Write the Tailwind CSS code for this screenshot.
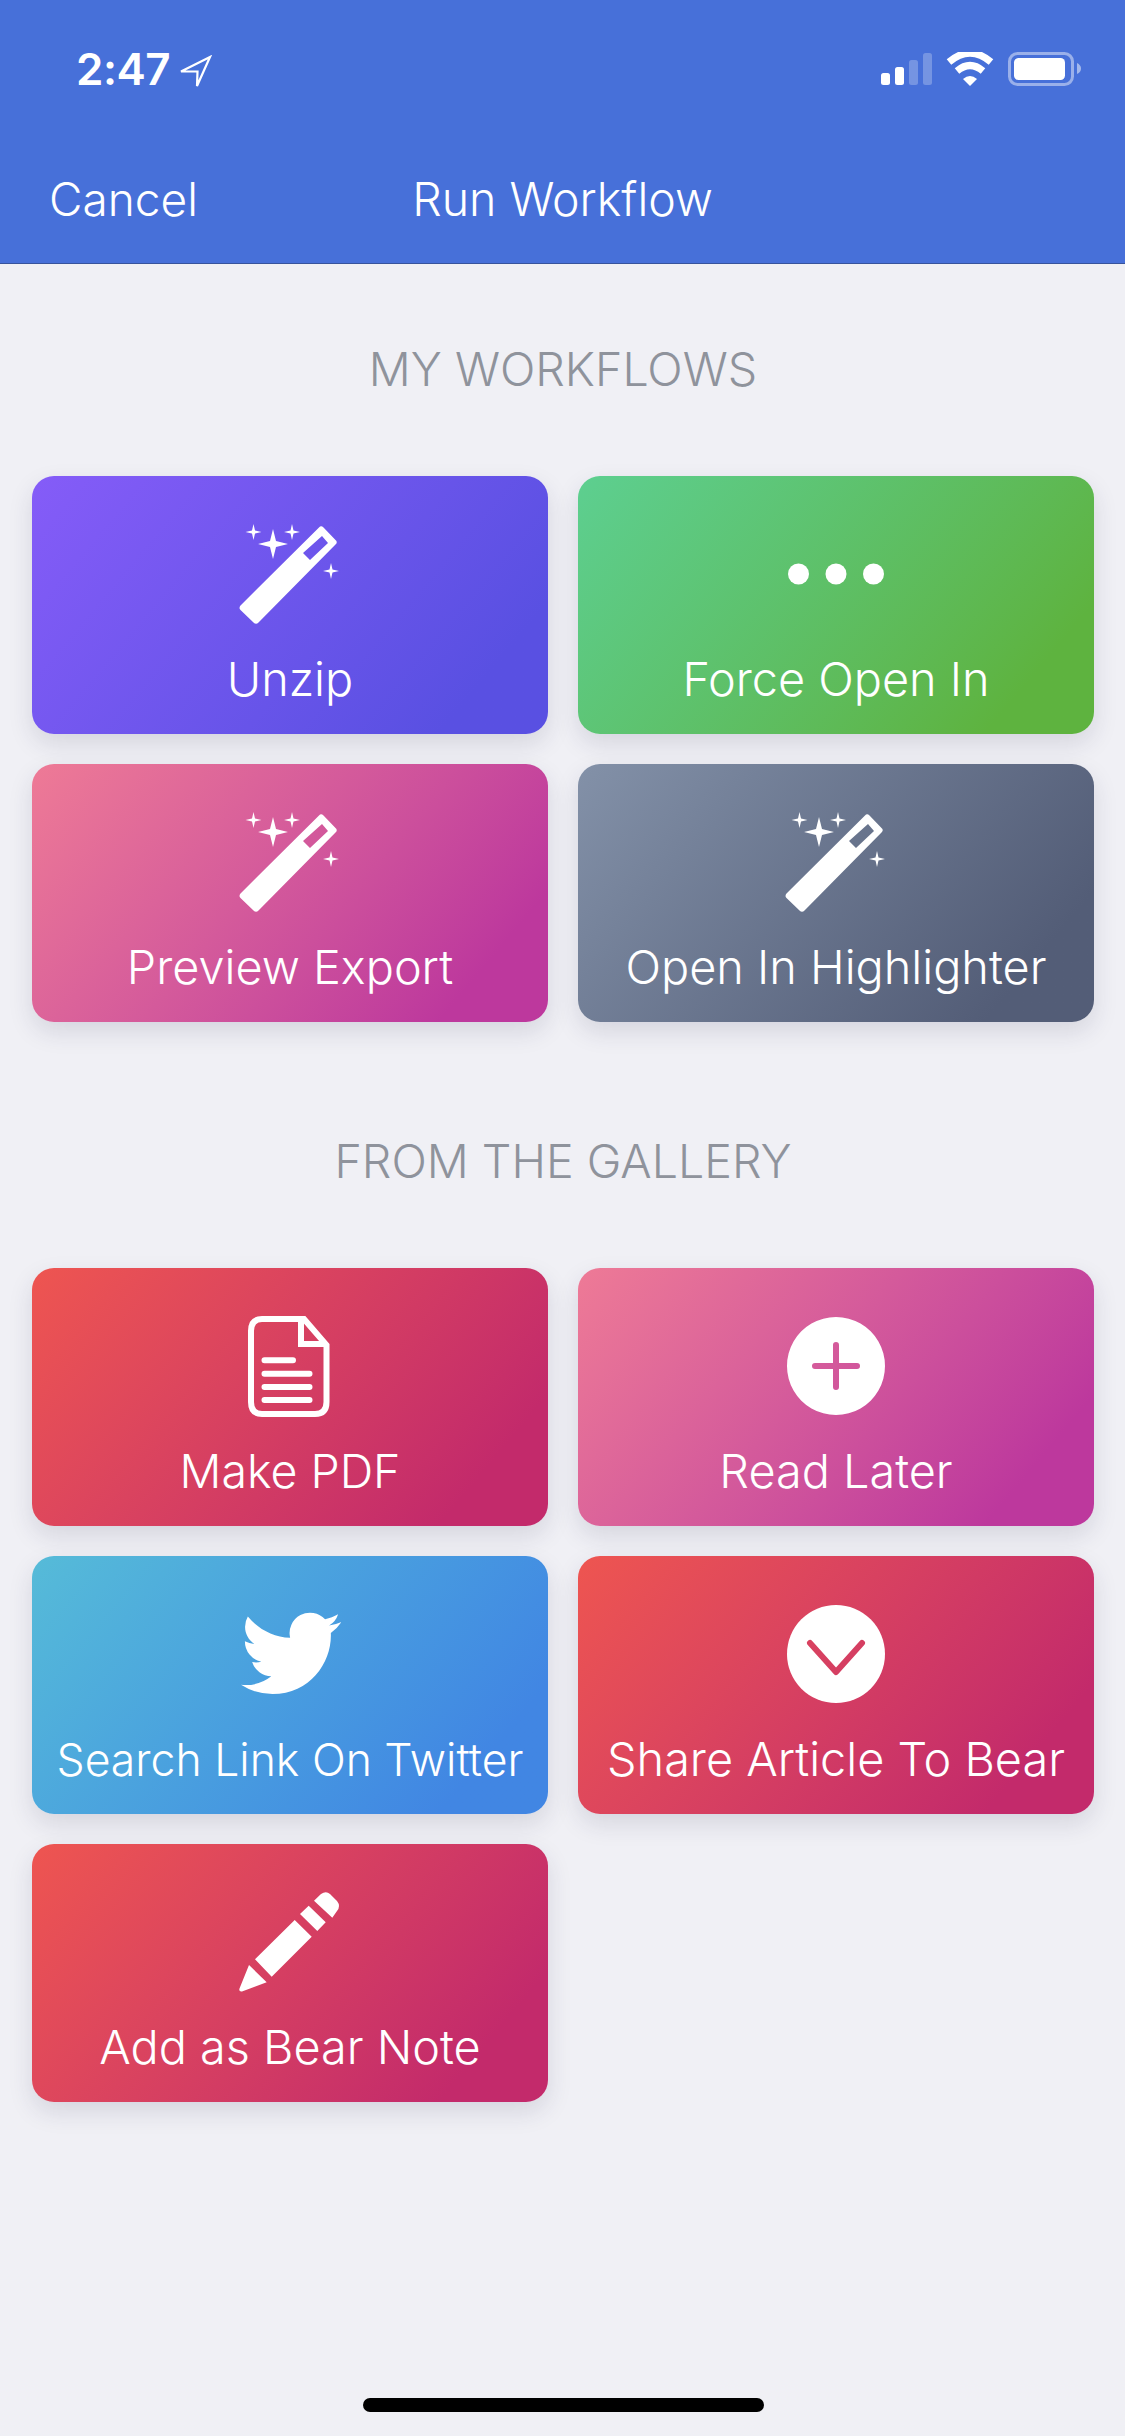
<!DOCTYPE html>
<html>
<head>
<meta charset="utf-8">
<script src="https://cdn.jsdelivr.net/npm/@tailwindcss/browser@4"></script>
</head>
<body class="m-0">
<div class="w-[1125px] h-[2436px] bg-[#f0f0f5] flex flex-col overflow-hidden font-['Inter',sans-serif]">
  <header class="h-[264px] bg-[#4770d9] border-b border-[#37539c] text-white shrink-0">
    <div class="h-[169px] flex justify-between pl-[76px] pr-[44px] pt-[46px]">
      <div class="flex items-start gap-[9px]">
        <span class="text-[44px] leading-[46px] font-semibold tracking-[-0.5px]">2:47</span>
        <svg class="w-[34px] h-[34px] mt-[9px]" viewBox="0 0 34 34"><path d="M31 2 L2 16.5 L18.5 16.5 L18 31 Z" fill="none" stroke="#fff" stroke-width="2.2" stroke-linejoin="miter"/></svg>
      </div>
      <div class="flex items-start">
        <svg class="w-[200px] h-[40px] mt-[6px]" viewBox="881 52 200 40">
          <rect x="881" y="73" width="9" height="12" rx="2.5" fill="#fff"/>
          <rect x="895" y="67" width="9" height="18" rx="2.5" fill="#fff"/>
          <rect x="909" y="60" width="9" height="25" rx="2.5" fill="#fff" fill-opacity=".25"/>
          <rect x="923" y="53" width="9" height="32" rx="2.5" fill="#fff" fill-opacity=".25"/>
          <path d="M949 62 Q970 44 991 62" fill="none" stroke="#fff" stroke-width="7" stroke-linejoin="round"/>
          <path d="M957 71 Q970 60 983 71" fill="none" stroke="#fff" stroke-width="7"/>
          <path d="M963 79 Q970 73 977 79 L970 86 Z" fill="#fff"/>
          <rect x="1009.5" y="53.5" width="63" height="31" rx="8" fill="none" stroke="#fff" stroke-opacity=".45" stroke-width="3"/>
          <rect x="1014" y="58" width="51" height="22" rx="4.5" fill="#fff"/>
          <path d="M1077 63 Q1081 65 1081 68.5 Q1081 72 1077 74 Z" fill="#fff" fill-opacity=".5"/>
        </svg>
      </div>
    </div>
    <div class="grid grid-cols-[1fr_auto_1fr] items-center h-[60px] px-[49px]">
      <span class="text-[46px] leading-[60px] font-light">Cancel</span>
      <span class="text-[46.5px] leading-[60px] font-light">Run Workflow</span>
      <span></span>
    </div>
  </header>

  <main class="flex-1 flex flex-col pl-[32px] pr-[31px]">
    <h2 class="mt-[75px] h-[60px] text-center text-[46.6px] leading-[60px] font-light text-[#8f939c]">MY WORKFLOWS</h2>
    <div class="mt-[77px] grid grid-cols-2 gap-[30px]">
      <div class="h-[258px] rounded-[22px] text-white flex flex-col items-center pt-[44px] bg-linear-130 from-[#855cf8] to-[#5950e2] to-85% shadow-[0_10px_24px_rgba(40,40,80,0.13)]">
        <svg class="w-[110px] h-[110px] shrink-0" viewBox="0 0 110 110" fill="#fff"><path fill-rule="evenodd" d="M84 7.5 Q86 5 88.5 7.5 L100.5 20 Q103 22 100.5 24.5 L23.5 102.5 Q21 105 18.5 102.5 L5.5 90 Q3.5 88 5.5 85.5 Z M87 16 L93 23 L75 40 L68 33 Z"/><path d="M38 9 L41 21 L53 24 L41 27 L38 39 L35 27 L23 24 L35 21 Z M18.5 4 L20 10.5 L26.5 12 L20 13.5 L18.5 20 L17 13.5 L10.5 12 L17 10.5 Z M57 4 L58.5 10.5 L65 12 L58.5 13.5 L57 20 L55.5 13.5 L49 12 L55.5 10.5 Z M96 43 L97.5 49.5 L104 51 L97.5 52.5 L96 59 L94.5 52.5 L88 51 L94.5 49.5 Z"/></svg>
        <span class="mt-[19px] text-[46.8px] leading-[60px] font-light whitespace-nowrap">Unzip</span>
      </div>
      <div class="h-[258px] rounded-[22px] text-white flex flex-col items-center pt-[44px] bg-linear-130 from-[#5dcf90] to-[#5eb33f] to-85% shadow-[0_10px_24px_rgba(40,40,80,0.13)]">
        <svg class="w-[110px] h-[110px] shrink-0" viewBox="0 0 110 110" fill="#fff"><circle cx="17.5" cy="54" r="10.5"/><circle cx="55" cy="54" r="10.5"/><circle cx="92.5" cy="54" r="10.5"/></svg>
        <span class="mt-[19px] text-[46.8px] leading-[60px] font-light whitespace-nowrap">Force Open In</span>
      </div>
      <div class="h-[258px] rounded-[22px] text-white flex flex-col items-center pt-[44px] bg-linear-130 from-[#ee7a96] to-[#bd389d] to-85% shadow-[0_10px_24px_rgba(40,40,80,0.13)]">
        <svg class="w-[110px] h-[110px] shrink-0" viewBox="0 0 110 110" fill="#fff"><path fill-rule="evenodd" d="M84 7.5 Q86 5 88.5 7.5 L100.5 20 Q103 22 100.5 24.5 L23.5 102.5 Q21 105 18.5 102.5 L5.5 90 Q3.5 88 5.5 85.5 Z M87 16 L93 23 L75 40 L68 33 Z"/><path d="M38 9 L41 21 L53 24 L41 27 L38 39 L35 27 L23 24 L35 21 Z M18.5 4 L20 10.5 L26.5 12 L20 13.5 L18.5 20 L17 13.5 L10.5 12 L17 10.5 Z M57 4 L58.5 10.5 L65 12 L58.5 13.5 L57 20 L55.5 13.5 L49 12 L55.5 10.5 Z M96 43 L97.5 49.5 L104 51 L97.5 52.5 L96 59 L94.5 52.5 L88 51 L94.5 49.5 Z"/></svg>
        <span class="mt-[19px] text-[46.8px] leading-[60px] font-light whitespace-nowrap">Preview Export</span>
      </div>
      <div class="h-[258px] rounded-[22px] text-white flex flex-col items-center pt-[44px] bg-linear-130 from-[#8391a8] to-[#535d77] to-85% shadow-[0_10px_24px_rgba(40,40,80,0.13)]">
        <svg class="w-[110px] h-[110px] shrink-0" viewBox="0 0 110 110" fill="#fff"><path fill-rule="evenodd" d="M84 7.5 Q86 5 88.5 7.5 L100.5 20 Q103 22 100.5 24.5 L23.5 102.5 Q21 105 18.5 102.5 L5.5 90 Q3.5 88 5.5 85.5 Z M87 16 L93 23 L75 40 L68 33 Z"/><path d="M38 9 L41 21 L53 24 L41 27 L38 39 L35 27 L23 24 L35 21 Z M18.5 4 L20 10.5 L26.5 12 L20 13.5 L18.5 20 L17 13.5 L10.5 12 L17 10.5 Z M57 4 L58.5 10.5 L65 12 L58.5 13.5 L57 20 L55.5 13.5 L49 12 L55.5 10.5 Z M96 43 L97.5 49.5 L104 51 L97.5 52.5 L96 59 L94.5 52.5 L88 51 L94.5 49.5 Z"/></svg>
        <span class="mt-[19px] text-[46.8px] leading-[60px] font-light whitespace-nowrap">Open In Highlighter</span>
      </div>
    </div>

    <h2 class="mt-[109px] h-[60px] text-center text-[46.6px] leading-[60px] font-light text-[#8f939c]">FROM THE GALLERY</h2>
    <div class="mt-[77px] grid grid-cols-2 gap-[30px]">
      <div class="h-[258px] rounded-[22px] text-white flex flex-col items-center pt-[44px] bg-linear-130 from-[#ee5550] to-[#c32a6b] to-85% shadow-[0_10px_24px_rgba(40,40,80,0.13)]">
        <svg class="w-[110px] h-[110px] shrink-0" viewBox="0 0 110 110" fill="none" stroke="#fff" stroke-width="6" stroke-linecap="round"><path d="M27 7 H69 L91.5 33 V90 Q91.5 102 80 102 H27 Q16 102 16 90 V19 Q16 7 27 7 Z"/><path stroke-linecap="butt" d="M66 7 V32 H91.5"/><path d="M29.5 48.3 H58 M29.5 61.7 H74.5 M29.5 75 H74.5 M29.5 88 H74.5"/></svg>
        <span class="mt-[19px] text-[46.5px] leading-[60px] font-light whitespace-nowrap">Make PDF</span>
      </div>
      <div class="h-[258px] rounded-[22px] text-white flex flex-col items-center pt-[44px] bg-linear-130 from-[#ee7a96] to-[#bd389d] to-85% shadow-[0_10px_24px_rgba(40,40,80,0.13)]">
        <svg class="w-[110px] h-[110px] shrink-0" viewBox="0 0 110 110" fill="#fff"><path fill-rule="evenodd" d="M55 5 A49 49 0 1 1 54.99 5 Z M52 33 a3 3 0 0 1 6 0 V51 H76 a3 3 0 0 1 0 6 H58 V75 a3 3 0 0 1 -6 0 V57 H34 a3 3 0 0 1 0 -6 H52 Z"/></svg>
        <span class="mt-[19px] text-[46.8px] leading-[60px] font-light whitespace-nowrap">Read Later</span>
      </div>
      <div class="h-[258px] rounded-[22px] text-white flex flex-col items-center pt-[44px] bg-linear-130 from-[#56bbd8] to-[#4186e3] to-85% shadow-[0_10px_24px_rgba(40,40,80,0.13)]">
        <svg class="w-[110px] h-[110px] shrink-0" viewBox="0 0 110 110" fill="#fff"><path transform="translate(6 3.3) scale(4.17)" d="M23.953 4.57a10 10 0 01-2.825.775 4.958 4.958 0 002.163-2.723c-.951.555-2.005.959-3.127 1.184a4.92 4.92 0 00-8.384 4.482C7.69 8.095 4.067 6.13 1.64 3.162a4.822 4.822 0 00-.666 2.475c0 1.71.87 3.213 2.188 4.096a4.904 4.904 0 01-2.228-.616v.06a4.923 4.923 0 003.946 4.827 4.996 4.996 0 01-2.212.085 4.936 4.936 0 004.604 3.417 9.867 9.867 0 01-6.102 2.105c-.39 0-.779-.023-1.17-.067a13.995 13.995 0 007.557 2.209c9.053 0 13.998-7.496 13.998-13.985 0-.21 0-.42-.015-.63A9.935 9.935 0 0024 4.59z"/></svg>
        <span class="mt-[20px] text-[44.5px] leading-[60px] font-light whitespace-nowrap">Search Link On Twitter</span>
      </div>
      <div class="h-[258px] rounded-[22px] text-white flex flex-col items-center pt-[44px] bg-linear-130 from-[#ee5550] to-[#c32a6b] to-85% shadow-[0_10px_24px_rgba(40,40,80,0.13)]">
        <svg class="w-[110px] h-[110px] shrink-0" viewBox="0 0 110 110"><mask id="chev"><circle cx="55" cy="54" r="49" fill="#fff"/><path d="M29 43 L55 72 L81 43" fill="none" stroke="#000" stroke-width="6" stroke-linecap="round" stroke-linejoin="round"/></mask><rect width="110" height="110" fill="#fff" mask="url(#chev)"/></svg>
        <span class="mt-[19px] text-[46.8px] leading-[60px] font-light whitespace-nowrap">Share Article To Bear</span>
      </div>
      <div class="h-[258px] rounded-[22px] text-white flex flex-col items-center pt-[44px] bg-linear-130 from-[#ee5550] to-[#c32a6b] to-85% shadow-[0_10px_24px_rgba(40,40,80,0.13)]">
        <svg class="w-[110px] h-[110px] shrink-0" viewBox="0 0 110 110" fill="#fff"><path d="M14 77 L31.7 94.3 L7 103.5 Q3.5 104 4.5 100.5 Z M59.7 32 L76.7 48.7 L36.7 88.7 L20 71.3 Z M73.7 17.7 L90.7 34.3 L82.3 43 L65 26 Z M79 12.7 L86 6 Q91 2.5 95 6 L102 13 Q106 18 102 23 L97.3 29.7 Z"/></svg>
        <span class="mt-[19px] text-[46.8px] leading-[60px] font-light whitespace-nowrap">Add as Bear Note</span>
      </div>
    </div>
    <div class="mt-auto mb-[24px] self-center w-[401px] h-[14px] rounded-full bg-black"></div>
  </main>
</div>
</body>
</html>
